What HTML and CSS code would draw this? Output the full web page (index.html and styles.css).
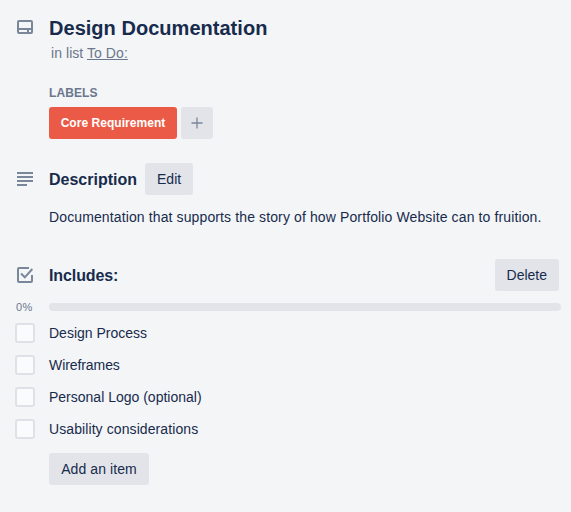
FILE: index.html
```html
<!DOCTYPE html>
<html lang="en">
<head>
<meta charset="utf-8">
<title>Design Documentation</title>
<link rel="stylesheet" href="styles.css">
</head>
<body>
<main class="card">
  <header class="row card-header">
    <svg class="icon" viewBox="0 0 24 24"><path fill-rule="evenodd" d="M6 5h12a2 2 0 0 1 2 2v10a2 2 0 0 1-2 2H6a2 2 0 0 1-2-2V7a2 2 0 0 1 2-2zM6 7v6h12V7zM6 15v2h8v-2zM16 15v2h2v-2z"/></svg>
    <div>
      <h1>Design Documentation</h1>
      <p class="location">in list <a>To Do:</a></p>
    </div>
  </header>
  <section class="labels">
    <h2>LABELS</h2>
    <div class="label-list">
      <span class="label">Core Requirement</span>
      <button class="button add-label" aria-label="Add label"><svg viewBox="0 0 12 12"><path d="M6 .5v11M.5 6h11"/></svg></button>
    </div>
  </section>
  <section class="row description">
    <svg class="icon" viewBox="0 0 24 24"><path d="M4 5h16v2H4zM4 9h16v2H4zM4 13h16v2H4zM4 17h10v2H4z"/></svg>
    <h3 class="description-title">Description</h3>
    <button class="button">Edit</button>
  </section>
  <p class="description-text">Documentation that supports the story of how Portfolio Website can to fruition.</p>
  <section class="row checklist-header">
    <svg class="icon" viewBox="0 0 24 24"><path class="stroke" d="M16 5H6a1 1 0 0 0-1 1v12a1 1 0 0 0 1 1h12a1 1 0 0 0 1-1v-6M8 10.5l3.8 3.8L19.3 6"/></svg>
    <h3 class="checklist-title">Includes:</h3>
    <button class="button delete">Delete</button>
  </section>
  <div class="progress"><span class="percent">0%</span><div class="bar"></div></div>
  <ul class="items">
    <li><i class="box"></i><span>Design Process</span></li>
    <li><i class="box"></i><span class="wireframes">Wireframes</span></li>
    <li><i class="box"></i><span>Personal Logo (optional)</span></li>
    <li><i class="box"></i><span class="usability">Usability considerations</span></li>
  </ul>
  <button class="button add-item">Add an item</button>
</main>
</body>
</html>
```
FILE: styles.css
```css
* { box-sizing: border-box; }
body {
  margin: 0;
  background: #f4f5f7;
  color: #172b4d;
  font: 14px/20px "Liberation Sans", Arial, sans-serif;
}
h1, h2, h3, p, ul { margin: 0; padding: 0; }
.card { height: 512px; padding: 15px 12px 0 13px; overflow: hidden; }
.row { display: flex; }
.icon { width: 24px; height: 24px; flex: none; margin-right: 12px; fill: #7a869a; }
.stroke { fill: none; stroke: #7a869a; stroke-width: 2; }
.card-header { height: 70px; }
h1 { font-size: 20px; line-height: 26px; letter-spacing: 0.03px; }
.location { padding-left: 2px; margin-top: 2px; color: #6b778c; letter-spacing: 0.06px; }
.location a { text-decoration: underline; text-underline-offset: 1px; }
.labels { margin-left: 36px; }
h2 { color: #6b778c; font-size: 12px; line-height: 16px; margin-bottom: 6px; letter-spacing: 0.08px; }
.label-list { display: flex; gap: 4px; }
.label {
  width: 128px;
  height: 32px;
  border-radius: 3px;
  background: #eb5a46;
  color: #fff;
  font-size: 12px;
  font-weight: 700;
  letter-spacing: 0.04px;
  line-height: 32px;
  text-align: center;
}
.button {
  height: 32px;
  padding: 0 12px;
  border: 0;
  border-radius: 3px;
  background: #e2e4e9;
  color: #172b4d;
  font: inherit;
  line-height: 32px;
  white-space: nowrap;
}
.add-label { display: flex; width: 32px; padding: 10px; }
.add-label svg { width: 12px; height: 12px; fill: none; stroke: #7a869a; stroke-width: 1.3; }
.description { align-items: center; margin-top: 24px; }
h3 { padding-top: 2px; font-size: 16px; line-height: 20px; }
.description-title { margin-right: 8px; }
.description-text { margin: 12px 0 0 36px; letter-spacing: 0.12px; white-space: nowrap; }
.checklist-header { align-items: center; margin-top: 32px; }
.checklist-title { letter-spacing: -0.1px; }
.delete { margin-left: auto; }
.progress { display: flex; align-items: center; height: 14px; margin: 9px -2px 0 3px; }
.percent { width: 33px; color: #6b778c; font-size: 11px; line-height: 14px; letter-spacing: 0.3px; }
.bar { flex: 1; height: 8px; border-radius: 4px; background: #e2e4e9; }
.items { margin-top: 3px; list-style: none; }
.items li { display: flex; align-items: center; height: 32px; padding-left: 2px; }
.wireframes { letter-spacing: -0.08px; }
.usability { letter-spacing: 0.09px; }
.box {
  width: 20px;
  height: 20px;
  margin-right: 14px;
  border: 2px solid #dfe1e6;
  border-radius: 3px;
  background: #fafbfc;
}
.add-item { width: 100px; margin: 8px 0 0 36px; letter-spacing: 0.09px; }
```
